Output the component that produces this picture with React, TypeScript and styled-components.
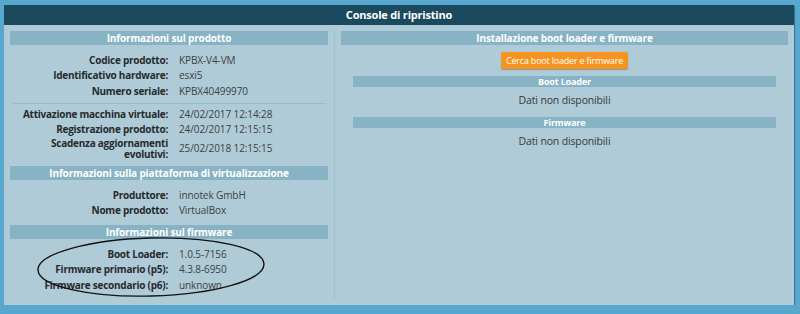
import React from "react";
import styled, { createGlobalStyle } from "styled-components";

const GlobalStyle = createGlobalStyle`
  html, body {
    margin: 0;
    padding: 0;
    background: #58a7ce;
  }
  body {
    font-family: "Open Sans", "Noto Sans", sans-serif;
    -webkit-font-smoothing: antialiased;
  }
`;

const Panel = styled.section`
  margin: 5px 0 0 4px;
  width: 790px;
  height: 300px;
  background: #afcbd7;
  box-shadow: 1px 1px 1px rgba(20, 60, 80, 0.45);
  display: flex;
  flex-direction: column;
`;

const Header = styled.header`
  height: 20px;
  background: #1b4a5f;
  color: #fff;
  font-weight: 700;
  font-size: 11px;
  letter-spacing: -0.2px;
  line-height: 20px;
  text-align: center;
`;

const Columns = styled.div`
  flex: 1;
  display: grid;
  grid-template-columns: 318px 1px 447px;
  column-gap: 6px;
  padding: 6px 6px 6px 6px;
`;

const Divider = styled.div`
  background: #9cc2d1;
  width: 1px;
`;

const Column = styled.div`
  display: flex;
  flex-direction: column;
  gap: 6.5px;
  min-width: 0;
`;

const Section = styled.div`
  display: flex;
  flex-direction: column;
`;

const Bar = styled.div<{ $small?: boolean; $inset?: number }>`
  background: #87b3c4;
  color: #fff;
  font-weight: 700;
  text-align: center;
  letter-spacing: -0.15px;
  height: ${(p) => (p.$small ? 11 : 14)}px;
  line-height: ${(p) => (p.$small ? 11 : 14)}px;
  font-size: ${(p) => (p.$small ? 9 : 10)}px;
  margin: 0 ${(p) => p.$inset ?? 0}px;
`;

const Rows = styled.div`
  position: relative;
  padding-top: 7.5px;
  display: flex;
  flex-direction: column;
`;

const Row = styled.div`
  display: grid;
  grid-template-columns: 158px 1fr;
  column-gap: 11px;
  align-items: center;
  min-height: 15.5px;
  font-size: 10px;
  line-height: 11px;
`;

const Label = styled.div`
  text-align: right;
  font-weight: 700;
  letter-spacing: -0.25px;
  color: #262a2c;
`;

const Value = styled.div`
  color: #3c4144;
  letter-spacing: -0.1px;
`;

const Separator = styled.hr`
  border: 0;
  height: 1px;
  background: #94bccb;
  margin: 3.5px 2px 3px 3px;
`;

const Button = styled.button`
  align-self: center;
  margin-top: 7px;
  height: 17px;
  padding: 0 5px;
  border: 0;
  border-radius: 2px;
  background: #f7941f;
  color: #fff;
  font-family: inherit;
  font-size: 9px;
  letter-spacing: -0.2px;
  box-shadow: 0 1px 1px rgba(0, 0, 0, 0.25);
  cursor: pointer;
`;

const SubSection = styled.div`
  display: flex;
  flex-direction: column;
  margin-top: 7px;
`;

const Empty = styled.div`
  text-align: center;
  font-size: 10.5px;
  letter-spacing: -0.15px;
  line-height: 15px;
  color: #353a3d;
  padding: 6px 0 2px;
`;

const Annotation = styled.svg`
  position: absolute;
  left: 25px;
  top: -4px;
  pointer-events: none;
  overflow: visible;
`;

type Item = { label: string; value: string };

const prodotto: Item[] = [
  { label: "Codice prodotto:", value: "KPBX-V4-VM" },
  { label: "Identificativo hardware:", value: "esxi5" },
  { label: "Numero seriale:", value: "KPBX40499970" },
];

const date: Item[] = [
  { label: "Attivazione macchina virtuale:", value: "24/02/2017 12:14:28" },
  { label: "Registrazione prodotto:", value: "24/02/2017 12:15:15" },
  { label: "Scadenza aggiornamenti evolutivi:", value: "25/02/2018 12:15:15" },
];

const piattaforma: Item[] = [
  { label: "Produttore:", value: "innotek GmbH" },
  { label: "Nome prodotto:", value: "VirtualBox" },
];

const firmware: Item[] = [
  { label: "Boot Loader:", value: "1.0.5-7156" },
  { label: "Firmware primario (p5):", value: "4.3.8-6950" },
  { label: "Firmware secondario (p6):", value: "unknown" },
];

function InfoRows({ items }: { items: Item[] }) {
  return (
    <>
      {items.map((it) => (
        <Row key={it.label}>
          <Label>{it.label}</Label>
          <Value>{it.value}</Value>
        </Row>
      ))}
    </>
  );
}

export default function App() {
  return (
    <>
      <GlobalStyle />
      <Panel>
        <Header>Console di ripristino</Header>
        <Columns>
          <Column>
            <Section>
              <Bar>Informazioni sul prodotto</Bar>
              <Rows>
                <InfoRows items={prodotto} />
                <Separator />
                <InfoRows items={date} />
              </Rows>
            </Section>
            <Section>
              <Bar>Informazioni sulla piattaforma di virtualizzazione</Bar>
              <Rows>
                <InfoRows items={piattaforma} />
              </Rows>
            </Section>
            <Section>
              <Bar>Informazioni sul firmware</Bar>
              <Rows>
                <InfoRows items={firmware} />
                <Annotation width="232" height="64" viewBox="0 0 232 64">
                  <ellipse
                    cx="116"
                    cy="32"
                    rx="113"
                    ry="29"
                    fill="none"
                    stroke="#111"
                    strokeWidth="1.4"
                    transform="rotate(-1.5 116 32)"
                  />
                </Annotation>
              </Rows>
            </Section>
          </Column>
          <Divider />
          <Column>
            <Section>
              <Bar>Installazione boot loader e firmware</Bar>
              <Button>Cerca boot loader e firmware</Button>
              <SubSection>
                <Bar $small $inset={12}>Boot Loader</Bar>
                <Empty>Dati non disponibili</Empty>
              </SubSection>
              <SubSection>
                <Bar $small $inset={12}>Firmware</Bar>
                <Empty>Dati non disponibili</Empty>
              </SubSection>
            </Section>
          </Column>
        </Columns>
      </Panel>
    </>
  );
}
